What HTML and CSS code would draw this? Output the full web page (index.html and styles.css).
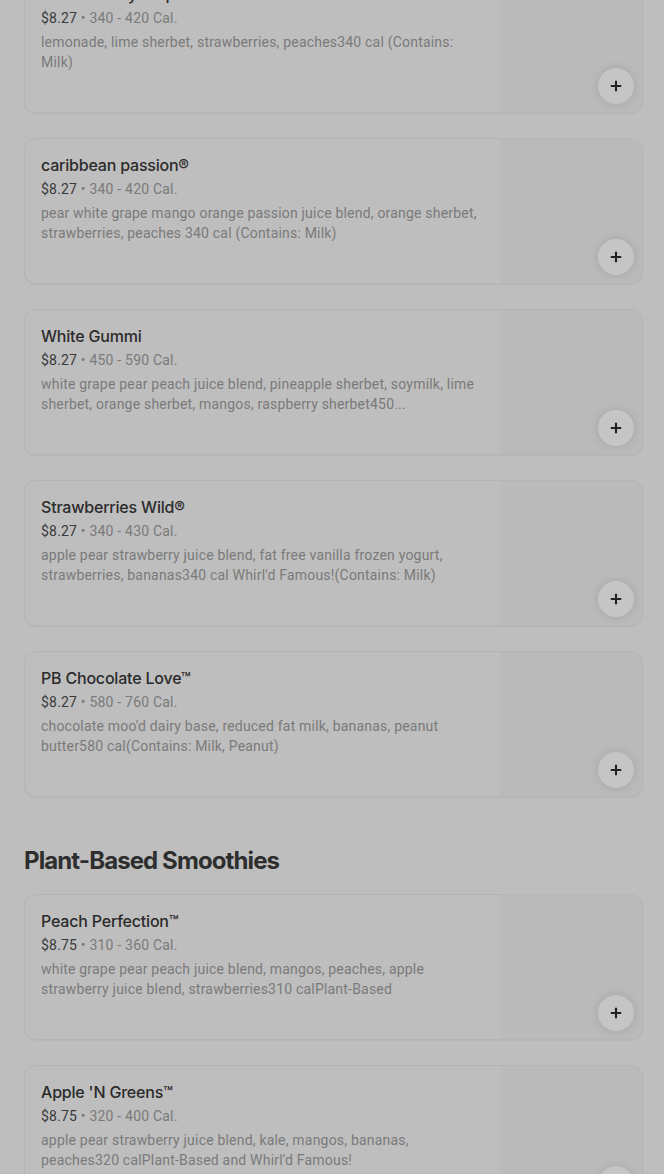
FILE: index.html
```html
<!DOCTYPE html>
<html lang="en">
<head>
<meta charset="utf-8">
<title>Menu</title>
<link rel="stylesheet" href="styles.css">
</head>
<body>
<main class="page">
  <section class="section section-first">
    <div class="list">
      <article class="card">
        <div class="info">
          <h3 class="name">Lemon Berry Tropics™</h3>
          <div class="meta"><span class="price">$8.27</span> • 340 - 420 Cal.</div>
          <p class="desc">lemonade, lime sherbet, strawberries, peaches340 cal (Contains: Milk)</p>
        </div>
        <div class="thumb"></div>
        <button class="add" aria-label="Add"><svg viewBox="0 0 16 16" width="14" height="14"><path d="M8 2v12M2 8h12" stroke="currentColor" stroke-width="2.4" fill="none"/></svg></button>
      </article>
      <article class="card">
        <div class="info">
          <h3 class="name">caribbean passion®</h3>
          <div class="meta"><span class="price">$8.27</span> • 340 - 420 Cal.</div>
          <p class="desc">pear white grape mango orange passion juice blend, orange sherbet, strawberries, peaches 340 cal (Contains: Milk)</p>
        </div>
        <div class="thumb"></div>
        <button class="add" aria-label="Add"><svg viewBox="0 0 16 16" width="14" height="14"><path d="M8 2v12M2 8h12" stroke="currentColor" stroke-width="2.4" fill="none"/></svg></button>
      </article>
      <article class="card">
        <div class="info">
          <h3 class="name">White Gummi</h3>
          <div class="meta"><span class="price">$8.27</span> • 450 - 590 Cal.</div>
          <p class="desc">white grape pear peach juice blend, pineapple sherbet, soymilk, lime sherbet, orange sherbet, mangos, raspberry sherbet450...</p>
        </div>
        <div class="thumb"></div>
        <button class="add" aria-label="Add"><svg viewBox="0 0 16 16" width="14" height="14"><path d="M8 2v12M2 8h12" stroke="currentColor" stroke-width="2.4" fill="none"/></svg></button>
      </article>
      <article class="card">
        <div class="info">
          <h3 class="name">Strawberries Wild®</h3>
          <div class="meta"><span class="price">$8.27</span> • 340 - 430 Cal.</div>
          <p class="desc">apple pear strawberry juice blend, fat free vanilla frozen yogurt, strawberries, bananas340 cal Whirl'd Famous!(Contains: Milk)</p>
        </div>
        <div class="thumb"></div>
        <button class="add" aria-label="Add"><svg viewBox="0 0 16 16" width="14" height="14"><path d="M8 2v12M2 8h12" stroke="currentColor" stroke-width="2.4" fill="none"/></svg></button>
      </article>
      <article class="card">
        <div class="info">
          <h3 class="name">PB Chocolate Love™</h3>
          <div class="meta"><span class="price">$8.27</span> • 580 - 760 Cal.</div>
          <p class="desc">chocolate moo'd dairy base, reduced fat milk, bananas, peanut butter580 cal(Contains: Milk, Peanut)</p>
        </div>
        <div class="thumb"></div>
        <button class="add" aria-label="Add"><svg viewBox="0 0 16 16" width="14" height="14"><path d="M8 2v12M2 8h12" stroke="currentColor" stroke-width="2.4" fill="none"/></svg></button>
      </article>
    </div>
  </section>

  <section class="section">
    <h2 class="section-title">Plant-Based Smoothies</h2>
    <div class="list">
      <article class="card">
        <div class="info">
          <h3 class="name">Peach Perfection™</h3>
          <div class="meta"><span class="price">$8.75</span> • 310 - 360 Cal.</div>
          <p class="desc">white grape pear peach juice blend, mangos, peaches, apple strawberry juice blend, strawberries310 calPlant-Based</p>
        </div>
        <div class="thumb"></div>
        <button class="add" aria-label="Add"><svg viewBox="0 0 16 16" width="14" height="14"><path d="M8 2v12M2 8h12" stroke="currentColor" stroke-width="2.4" fill="none"/></svg></button>
      </article>
      <article class="card">
        <div class="info">
          <h3 class="name">Apple 'N Greens™</h3>
          <div class="meta"><span class="price">$8.75</span> • 320 - 400 Cal.</div>
          <p class="desc">apple pear strawberry juice blend, kale, mangos, bananas, peaches320 calPlant-Based and Whirl'd Famous!</p>
        </div>
        <div class="thumb"></div>
        <button class="add" aria-label="Add"><svg viewBox="0 0 16 16" width="14" height="14"><path d="M8 2v12M2 8h12" stroke="currentColor" stroke-width="2.4" fill="none"/></svg></button>
      </article>
    </div>
  </section>
</main>
</body>
</html>
```

FILE: styles.css
```css
* { box-sizing: border-box; }

html, body {
  margin: 0;
  padding: 0;
  background: #bebebe;
}

body {
  font-family: Roboto, "Liberation Sans", sans-serif;
  color: #2b2b2b;
  overflow: hidden;
}

.page {
  padding: 0 21px 0 24px;
  margin-top: -33px;
}

.section-title {
  font-family: Inter, "Liberation Sans", sans-serif;
  font-size: 24px;
  line-height: 32px;
  font-weight: 700;
  letter-spacing: -0.9px;
  color: #2e2e2e;
  margin: 48px 0 17px;
}

.list {
  display: flex;
  flex-direction: column;
  gap: 25px;
}

.card {
  position: relative;
  display: flex;
  height: 146px;
  border: 1px solid #b5b5b5;
  border-radius: 12px;
  background: #bebebe;
  box-shadow: 0 1px 2px rgba(0, 0, 0, 0.04);
  overflow: hidden;
}

.info {
  flex: 1;
  min-width: 0;
  padding: 14px 16px 0 16px;
}

.name {
  margin: 0 0 2px;
  font-family: Inter, "Liberation Sans", sans-serif;
  font-size: 16px;
  line-height: 24px;
  font-weight: 500;
  letter-spacing: -0.2px;
  color: #2b2b2b;
}

.meta {
  font-size: 14px;
  line-height: 20px;
  letter-spacing: 0.2px;
  color: #7a7a7a;
}

.price {
  color: #3a3a3a;
}

.desc {
  margin: 4px 0 0;
  font-size: 14px;
  line-height: 20px;
  letter-spacing: 0.2px;
  color: #7a7a7a;
  display: -webkit-box;
  -webkit-line-clamp: 2;
  -webkit-box-orient: vertical;
  overflow: hidden;
}

.thumb {
  flex: 0 0 142px;
  background: #bababa;
  border-left: 1px solid #bcbcbc;
}

.add {
  position: absolute;
  right: 8px;
  bottom: 8px;
  width: 36px;
  height: 36px;
  border: none;
  border-radius: 50%;
  background: #c5c5c5;
  color: #222222;
  box-shadow: 0 0 8px rgba(0, 0, 0, 0.12);
  display: flex;
  align-items: center;
  justify-content: center;
  padding: 0;
}
```
